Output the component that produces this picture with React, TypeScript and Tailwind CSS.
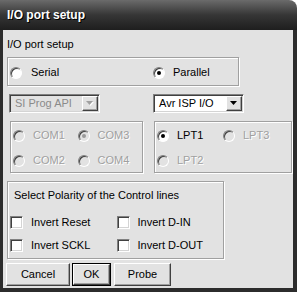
const Radio = ({ checked, disabled }: { checked?: boolean; disabled?: boolean }) => (
  <span
    className={`flex h-[12px] w-[12px] shrink-0 items-center justify-center rounded-full border border-t-[#808080] border-l-[#808080] border-r-white border-b-white shadow-[inset_1px_1px_0_#404040] ${
      disabled ? "bg-[#e2e2e2]" : "bg-white"
    }`}
  >
    {checked && (
      <span className={`h-[4px] w-[4px] rounded-full ${disabled ? "bg-[#9a9a9a]" : "bg-black"}`} />
    )}
  </span>
);

const Check = () => (
  <span className="h-[13px] w-[13px] shrink-0 border border-t-[#808080] border-l-[#808080] border-r-white border-b-white bg-white shadow-[inset_1px_1px_0_#404040,inset_-1px_-1px_0_#d4d4d4]" />
);

const Arrow = ({ disabled }: { disabled?: boolean }) => (
  <span className="flex h-[15px] w-[16px] items-center justify-center border border-t-white border-l-white border-b-[#404040] border-r-[#404040] bg-[#e2e2e2] shadow-[inset_-1px_-1px_0_#a0a0a0]">
    <svg width="8" height="5" viewBox="0 0 8 5">
      {disabled && <polygon points="1,1 8,1 4.5,5" fill="#ffffff" />}
      <polygon points="0,0 7,0 3.5,4" fill={disabled ? "#a0a0a0" : "#000000"} />
    </svg>
  </span>
);

const Combo = ({ label, disabled }: { label: string; disabled?: boolean }) => (
  <div
    className={`flex h-[19px] w-[91px] items-center justify-between border border-t-[#808080] border-l-[#808080] border-b-white border-r-white pl-[5px] pr-[1px] shadow-[inset_1px_1px_0_#404040,inset_-1px_-1px_0_#d4d4d4] ${
      disabled ? "bg-[#e2e2e2] text-[#8a8a8a]" : "bg-white text-black"
    }`}
  >
    <span>{label}</span>
    <Arrow disabled={disabled} />
  </div>
);

const Option = ({
  label,
  checked,
  disabled,
}: {
  label: string;
  checked?: boolean;
  disabled?: boolean;
}) => (
  <div className="flex w-[66px] items-center gap-[8px]">
    <Radio checked={checked} disabled={disabled} />
    <span className={disabled ? "text-[#a0a0a0] [text-shadow:1px_1px_0_#ffffff]" : "text-black"}>
      {label}
    </span>
  </div>
);

const CheckItem = ({ label }: { label: string }) => (
  <div className="flex w-[107px] items-center gap-[8px]">
    <Check />
    <span>{label}</span>
  </div>
);

const etched = "border border-[#a0a0a0] shadow-[inset_1px_1px_0_#ffffff,1px_1px_0_#ffffff]";

const App = () => {
  return (
    <div className="flex h-[292px] w-[297px] flex-col font-['Liberation_Sans',Arial,sans-serif] text-[11px] leading-[13px] text-black select-none">
      <div className="flex h-[30px] shrink-0 items-center rounded-tr-[8px] bg-linear-to-b from-[#6b6b6b] via-[#363636] to-[#1e1e1e] pl-[7px] pt-[1px]">
        <span className="text-[12px] font-bold text-white [text-shadow:1px_1px_0_#000]">
          I/O port setup
        </span>
      </div>

      <div className="flex flex-1 flex-col border-b-[4px] border-l-[3px] border-r-[4px] border-[#2c2c2c] bg-[#e2e2e2]">
        <div className="ml-[4px] mt-[8px]">I/O port setup</div>

        <div className={`ml-[4px] mt-[6px] flex h-[29px] w-[232px] items-center pl-[2px] pt-[2px] ${etched}`}>
          <div className="flex w-[143px] items-center gap-[9px]">
            <Radio />
            <span>Serial</span>
          </div>
          <div className="flex items-center gap-[8px]">
            <Radio checked />
            <span>Parallel</span>
          </div>
        </div>

        <div className="mt-[8px] flex">
          <div className="ml-[6px]">
            <Combo label="SI Prog API" disabled />
          </div>
          <div className="ml-[53px]">
            <Combo label="Avr ISP I/O" />
          </div>
        </div>

        <div className="mt-[8px] flex">
          <div className={`ml-[7px] flex h-[52px] w-[133px] flex-col gap-[12px] pl-[2px] pt-[7px] ${etched}`}>
            <div className="flex">
              <Option label="COM1" disabled />
              <Option label="COM3" checked disabled />
            </div>
            <div className="flex">
              <Option label="COM2" disabled />
              <Option label="COM4" disabled />
            </div>
          </div>
          <div className={`ml-[11px] flex h-[52px] w-[138px] flex-col gap-[12px] pl-[2px] pt-[7px] ${etched}`}>
            <div className="flex">
              <Option label="LPT1" checked />
              <Option label="LPT3" disabled />
            </div>
            <div className="flex">
              <Option label="LPT2" disabled />
            </div>
          </div>
        </div>

        <div className={`ml-[4px] mt-[8px] flex h-[78px] w-[217px] flex-col pl-[2px] pt-[7px] ${etched}`}>
          <div className="ml-[4px]">Select Polarity of the Control lines</div>
          <div className="mt-[14px] flex">
            <CheckItem label="Invert Reset" />
            <CheckItem label="Invert D-IN" />
          </div>
          <div className="mt-[10px] flex">
            <CheckItem label="Invert SCKL" />
            <CheckItem label="Invert D-OUT" />
          </div>
        </div>

        <div className="ml-[3px] mt-[4px] flex">
          <button className="flex h-[23px] w-[64px] items-center justify-center border border-t-white border-l-white border-b-[#404040] border-r-[#404040] bg-[#e2e2e2] shadow-[inset_-1px_-1px_0_#a0a0a0]">
            Cancel
          </button>
          <div className="ml-[2px] h-[23px] w-[39px] border border-black">
            <button className="flex h-full w-full items-center justify-center border border-t-white border-l-white border-b-[#404040] border-r-[#404040] bg-[#e2e2e2] shadow-[inset_-1px_-1px_0_#a0a0a0]">
              OK
            </button>
          </div>
          <button className="ml-[3px] flex h-[23px] w-[57px] items-center justify-center border border-t-white border-l-white border-b-[#404040] border-r-[#404040] bg-[#e2e2e2] shadow-[inset_-1px_-1px_0_#a0a0a0]">
            Probe
          </button>
        </div>
      </div>
    </div>
  );
};

export default App;
